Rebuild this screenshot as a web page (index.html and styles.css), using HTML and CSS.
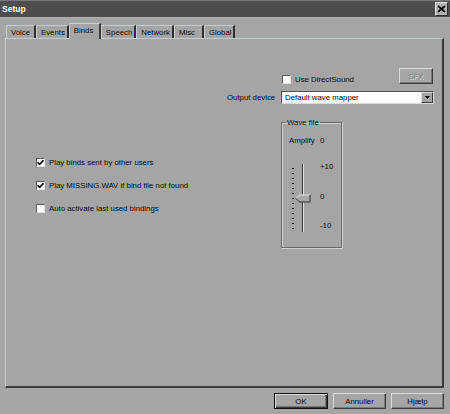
FILE: index.html
```html
<!DOCTYPE html>
<html lang="da">
<head>
<meta charset="utf-8">
<title>Setup</title>
<link rel="stylesheet" href="styles.css">
</head>
<body>
<div class="dialog">
  <div class="titlebar">
    <span class="title">Setup</span>
    <span class="close">
      <svg width="9" height="8" viewBox="0 0 9 8"><path d="M1 1 L8 7 M8 1 L1 7" stroke="#000" stroke-width="1.8"/></svg>
    </span>
  </div>

  <div class="tabs">
    <div class="tab">Voice</div>
    <div class="tab">Events</div>
    <div class="tab active">Binds</div>
    <div class="tab">Speech</div>
    <div class="tab">Network</div>
    <div class="tab">Misc</div>
    <div class="tab">Global</div>
  </div>

  <div class="panel">
    <div class="left-col">
      <label class="check-row">
        <span class="box"><svg width="7" height="7" viewBox="0 0 7 7"><path d="M0.5 3.2 L2.6 5.4 L6.5 1.3" fill="none" stroke="#000" stroke-width="1.6"/></svg></span>
        <span>Play binds sent by other users</span>
      </label>
      <label class="check-row">
        <span class="box"><svg width="7" height="7" viewBox="0 0 7 7"><path d="M0.5 3.2 L2.6 5.4 L6.5 1.3" fill="none" stroke="#000" stroke-width="1.6"/></svg></span>
        <span>Play MISSING.WAV if bind file not found</span>
      </label>
      <label class="check-row">
        <span class="box"></span>
        <span>Auto activate last used bindings</span>
      </label>
    </div>

    <div class="right-col">
      <div class="ds-row">
        <label class="check-row ds-check">
          <span class="box"></span>
          <span>Use DirectSound</span>
        </label>
        <div class="btn btn-disabled sfx">SFX</div>
      </div>

      <div class="device-row">
        <span class="device-label">Output device</span>
        <div class="combo">
          <span class="combo-text">Default wave mapper</span>
          <span class="combo-btn"><svg width="5" height="3" viewBox="0 0 5 3"><path d="M0 0 H5 L2.5 3 Z" fill="#000"/></svg></span>
        </div>
      </div>

      <fieldset class="group">
        <legend>Wave file</legend>
        <div class="amp-row">
          <span class="amp-label">Amplify</span>
          <span>0</span>
        </div>
        <div class="slider-row">
          <svg class="slider" width="26" height="75" viewBox="0 0 26 75">
            <g fill="#1a1a1a">
              <rect x="3" y="7" width="2" height="1"/>
              <rect x="3" y="12" width="2" height="1"/>
              <rect x="3" y="17" width="2" height="1"/>
              <rect x="3" y="22" width="2" height="1"/>
              <rect x="3" y="27" width="2" height="1"/>
              <rect x="3" y="32" width="2" height="1"/>
              <rect x="3" y="37" width="2" height="1"/>
              <rect x="3" y="42" width="2" height="1"/>
              <rect x="3" y="47" width="2" height="1"/>
              <rect x="3" y="52" width="2" height="1"/>
              <rect x="3" y="57" width="2" height="1"/>
              <rect x="3" y="62" width="2" height="1"/>
              <rect x="3" y="67" width="2" height="1"/>
            </g>
            <rect x="13" y="3" width="1" height="68" fill="#3a3a3a"/>
            <rect x="14" y="3" width="1" height="68" fill="#e2e2e2"/>
            <path d="M7 37.5 L10.5 34 H21 V41 H10.5 Z" fill="#a8a8a8"/>
            <path d="M7 37.5 L10.5 34 H21" fill="none" stroke="#e6e6e6" stroke-width="1"/>
            <path d="M21 34 V41 H10.5 L7 37.5" fill="none" stroke="#2a2a2a" stroke-width="1"/>
          </svg>
          <div class="slider-labels">
            <span>+10</span>
            <span>0</span>
            <span>-10</span>
          </div>
        </div>
      </fieldset>
    </div>
  </div>

  <div class="footer">
    <div class="btn btn-default">OK</div>
    <div class="btn">Annuller</div>
    <div class="btn">Hjælp</div>
  </div>
</div>
</body>
</html>
```

FILE: styles.css
```css
* { box-sizing: border-box; }

html, body {
  margin: 0;
  padding: 0;
}

body {
  width: 450px;
  height: 414px;
  overflow: hidden;
  background: #a5a5a5;
  font-family: "Liberation Sans", Arial, sans-serif;
  font-size: 7.8px;
  color: #0a0a0a;
}

.dialog {
  width: 450px;
  height: 414px;
}

.titlebar {
  height: 18px;
  background: #4d4d4d;
  border-top: 1px solid #7a7a7a;
  border-bottom: 1px solid #b2b2b2;
  display: flex;
  align-items: center;
  padding: 0 2px 0 2px;
}

.title {
  color: #ffffff;
  font-weight: bold;
  font-size: 8.5px;
}

.close {
  margin-left: auto;
  width: 13px;
  height: 14px;
  background: #b4b4b4;
  border: 1px solid;
  border-color: #e8e8e8 #2e2e2e #2e2e2e #e8e8e8;
  display: flex;
  align-items: center;
  justify-content: center;
}

.tabs {
  margin-top: 5px;
  height: 15px;
  padding-left: 6px;
  display: flex;
  align-items: flex-end;
  position: relative;
  z-index: 1;
}

.tab {
  height: 13px;
  padding: 0 2px 0 4px;
  min-width: 30px;
  display: flex;
  align-items: center;
  border-top: 1px solid #c6cdd0;
  border-left: 1px solid #c6cdd0;
  border-right: 2px solid #2f2f2f;
  border-top-left-radius: 1px;
  background: #a5a5a5;
}

.tab.active {
  height: 16px;
  min-width: 32px;
  margin-bottom: -1px;
  padding-bottom: 2px;
  border-right-color: #3a3a3a;
}

.panel {
  margin-left: 5px;
  width: 439px;
  height: 350px;
  border-top: 1px solid #c6cdd0;
  border-left: 1px solid #c6cdd0;
  border-right: 2px solid #3a3a3a;
  border-bottom: 2px solid #3e3e3e;
  display: flex;
}

.left-col {
  width: 221px;
  padding: 117px 0 0 30px;
  display: flex;
  flex-direction: column;
  gap: 10px;
}

.check-row {
  display: flex;
  align-items: center;
  gap: 4px;
  height: 13px;
  white-space: nowrap;
}

.box {
  width: 9px;
  height: 9px;
  background: #ffffff;
  border: 1px solid;
  border-color: #555555 #e2e2e2 #e2e2e2 #555555;
  display: flex;
  align-items: center;
  justify-content: center;
  flex: none;
}

.right-col {
  width: 207px;
  display: flex;
  flex-direction: column;
}

.ds-row {
  margin-top: 29px;
  height: 16px;
  display: flex;
  align-items: flex-end;
}

.ds-check {
  margin-left: 55px;
  height: 10px;
}

.btn {
  height: 16px;
  display: flex;
  align-items: center;
  justify-content: center;
  background: #a5a5a5;
  border: 1px solid;
  border-color: #dcdcdc #3a3a3a #3a3a3a #dcdcdc;
  box-shadow: inset -1px -1px 0 #787878;
}

.sfx {
  margin-left: auto;
  margin-right: 1px;
  width: 34px;
  align-self: flex-start;
}

.btn-disabled {
  color: #7c7c7c;
  text-shadow: 1px 1px 0 #d8d8d8;
}

.device-row {
  margin-top: 7px;
  height: 13px;
  display: flex;
  align-items: center;
}

.device-label {
  width: 54px;
  white-space: nowrap;
}

.combo {
  width: 153px;
  height: 13px;
  background: #ffffff;
  border: 1px solid;
  border-color: #505050 #dcdcdc #dcdcdc #505050;
  display: flex;
  align-items: center;
}

.combo-text {
  padding-left: 3px;
  flex: 1;
  white-space: nowrap;
}

.combo-btn {
  width: 12px;
  height: 11px;
  background: #a5a5a5;
  border: 1px solid;
  border-color: #dcdcdc #3a3a3a #3a3a3a #dcdcdc;
  display: flex;
  align-items: center;
  justify-content: center;
}

.group {
  margin: 14px 0 0 54px;
  padding: 0;
  width: 61px;
  height: 130px;
  border: 1px solid #6a6a6a;
  box-shadow: 1px 1px 0 #d2d2d2, inset 1px 1px 0 #d2d2d2;
  min-width: 0;
}

.group legend {
  margin-left: 4px;
  padding: 0 1px;
  line-height: 9px;
}

.amp-row {
  margin-top: 9px;
  padding-left: 7px;
  display: flex;
  line-height: 10px;
}

.amp-label {
  width: 31px;
}

.slider-row {
  margin-top: 15px;
  padding-left: 7px;
  display: flex;
}

.slider {
  display: block;
  flex: none;
}

.slider-labels {
  margin-left: 5px;
  margin-top: 1px;
  height: 69px;
  line-height: 10px;
  display: flex;
  flex-direction: column;
  justify-content: space-between;
}

.footer {
  margin-top: 5px;
  padding-right: 6px;
  display: flex;
  justify-content: flex-end;
  gap: 5px;
}

.footer .btn {
  width: 53px;
}

.footer .btn-default {
  width: 54px;
  border: 1px solid #101010;
  box-shadow: inset 1px 1px 0 #dcdcdc, inset -1px -1px 0 #3a3a3a, inset -2px -2px 0 #787878;
}
```
